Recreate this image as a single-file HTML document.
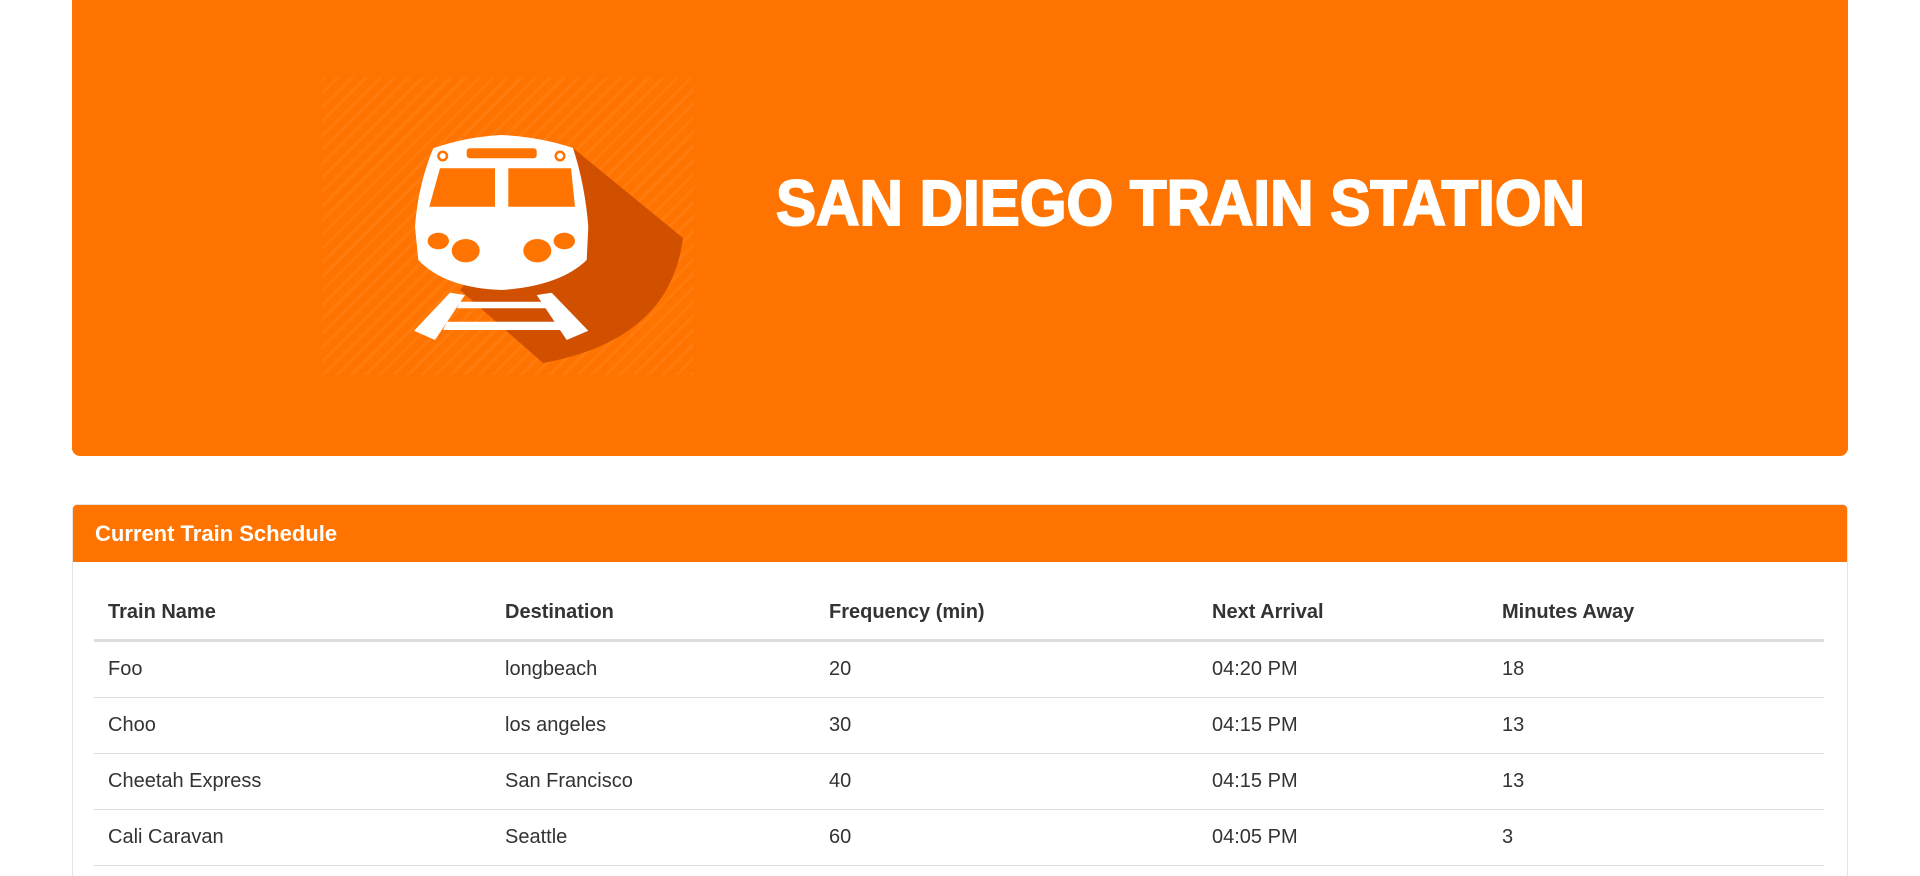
<!DOCTYPE html>
<html style="overflow:hidden;height:876px"><head><meta charset="utf-8"><style>
body{margin:0;width:1920px;height:876px;overflow:hidden;background:#fff;font-family:"Liberation Sans",Arial,sans-serif;color:#333;position:relative}
.jumbo{position:absolute;left:72px;top:0;width:1776px;height:456px;background:#ff7400;border-radius:0 0 8px 8px}
.pat{position:absolute;left:322px;top:77px;width:372px;height:298px;background:repeating-linear-gradient(135deg,rgba(255,255,255,0.05) 0 3px,transparent 3px 10px)}
.panel{position:absolute;left:72px;top:504px;width:1774px;height:372px;border:1px solid #e4e4e4;border-bottom:none;border-radius:5px 5px 0 0;overflow:hidden}
.ph{background:#ff7400;height:57px;color:#fff;font-weight:bold;font-size:22px;line-height:57px;padding-left:22px}
table{position:absolute;left:21px;top:80px;width:1730px;border-collapse:collapse;font-size:20px}
th{text-align:left;font-weight:bold;height:54px;border-bottom:3px solid #ddd;padding:0 0 0 14px;vertical-align:middle}
td{height:55px;border-bottom:1px solid #ddd;padding:0 0 0 14px}
</style></head><body>
<div class="jumbo"></div>
<div class="pat"></div>
<svg style="position:absolute;left:300px;top:60px" width="420" height="330" viewBox="300 60 420 330">
<path d="M573 148 L683 238 Q670 340 543 363 L460 290 Z" fill="#d15000"/>
<path d="M501.7 135 Q540 137 573 148 Q585 185 588.3 226.7 L586.7 260 Q560 286 501.7 290 Q445 288 418.3 260 L415 226.7 Q418 185 433.3 148.3 Q465 137 501.7 135 Z" fill="#fff"/>
<path d="M440 168.3 L495 168.3 L495 206.7 L429.3 206.7 Z" fill="#ff7400"/>
<path d="M508.3 168.3 L571 168.3 L575 206.7 L508.3 206.7 Z" fill="#ff7400"/>
<rect x="466.7" y="148.3" width="70" height="10" rx="3" fill="#ff7400"/>
<circle cx="442.7" cy="156" r="5.5" fill="#ff7400"/><circle cx="442.7" cy="156" r="3" fill="#fff"/>
<circle cx="560" cy="156" r="5.5" fill="#ff7400"/><circle cx="560" cy="156" r="3" fill="#fff"/>
<ellipse cx="438.3" cy="241" rx="10.7" ry="8.3" fill="#ff7400"/>
<ellipse cx="465.7" cy="250.7" rx="14" ry="11.7" fill="#ff7400"/>
<ellipse cx="537.3" cy="250.7" rx="14" ry="11.7" fill="#ff7400"/>
<ellipse cx="564.3" cy="241" rx="10.7" ry="8.3" fill="#ff7400"/>
<path d="M450 292.7 L465 295 L435 340 L414 330.7 Z" fill="#fff"/>
<path d="M536.7 295 L551.7 292.7 L588.3 330.7 L566.7 340 Z" fill="#fff"/>
<path d="M460 301.7 L545 301.7 L548 308.3 L457 308.3 Z" fill="#fff"/>
<path d="M447 321.7 L558 321.7 L561 330 L443 330 Z" fill="#fff"/>
</svg>
<svg style="position:absolute;left:776px;top:170px" width="820" height="70"><text x="0" y="55" textLength="809" lengthAdjust="spacingAndGlyphs" font-family="Liberation Sans,Arial,sans-serif" font-weight="bold" font-size="64" fill="#fff" stroke="#fff" stroke-width="2">SAN DIEGO TRAIN STATION</text></svg>
<div class="panel"><div class="ph">Current Train Schedule</div>
<table>
<colgroup><col style="width:397px"><col style="width:324px"><col style="width:383px"><col style="width:290px"><col></colgroup>
<tr><th>Train Name</th><th>Destination</th><th>Frequency (min)</th><th>Next Arrival</th><th>Minutes Away</th></tr>
<tr><td>Foo</td><td>longbeach</td><td>20</td><td>04:20 PM</td><td>18</td></tr>
<tr><td>Choo</td><td>los angeles</td><td>30</td><td>04:15 PM</td><td>13</td></tr>
<tr><td>Cheetah Express</td><td>San Francisco</td><td>40</td><td>04:15 PM</td><td>13</td></tr>
<tr><td>Cali Caravan</td><td>Seattle</td><td>60</td><td>04:05 PM</td><td>3</td></tr>
<tr><td>Ocean Trolley</td><td>Portland</td><td>90</td><td>05:25 PM</td><td>83</td></tr>
</table></div>
</body></html>
